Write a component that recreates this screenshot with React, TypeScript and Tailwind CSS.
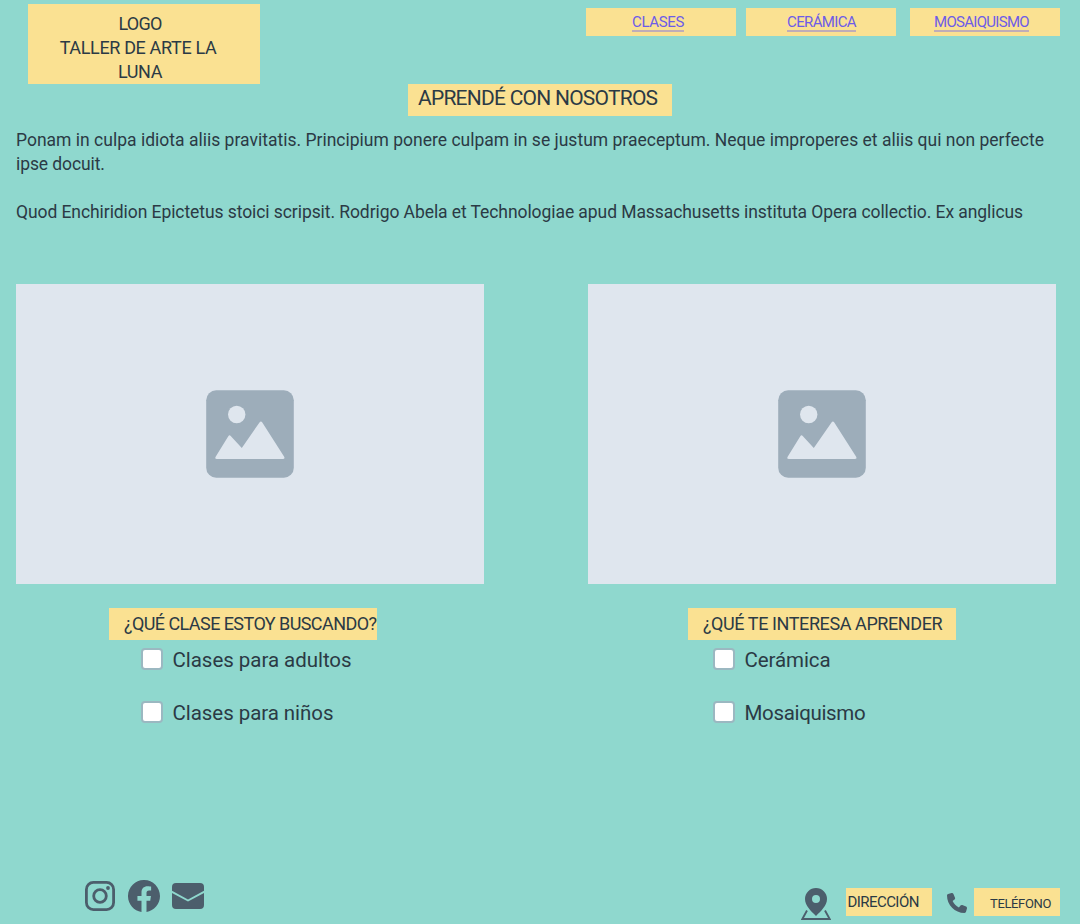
import React from "react";
import { BsFacebook } from "react-icons/bs";
import { FaPhone } from "react-icons/fa6";

function ImagePlaceholder() {
  return (
    <div className="flex h-[300px] w-[468px] items-center justify-center bg-[#dfe6ee]">
      <svg className="size-[88px]" viewBox="0 0 88 88">
        <rect x="0.2" y="0.2" width="87.6" height="87.6" rx="10" fill="#9dadba" />
        <circle cx="30.7" cy="24.5" r="8.7" fill="#dfe6ee" />
        <path
          d="M9.800 66.500 22.300 46.300Q23.500 44.500 24.700 46L35.800 58 53.500 32.400Q54.900 30.400 56.300 32.400L78 66.500Q79.400 69 76.800 69H10.800Q8.400 69 9.800 66.500Z"
          fill="#dfe6ee"
        />
      </svg>
    </div>
  );
}

function Option({ label, tracking }: { label: string; tracking: string }) {
  return (
    <label className="flex h-[22px] items-center gap-[9.5px]">
      <span className="size-[22px] shrink-0 rounded-[4px] border-2 border-[#9bb8c1] bg-white" />
      <span className={`pt-0.5 text-[20.5px] leading-[22px] whitespace-nowrap ${tracking}`}>{label}</span>
    </label>
  );
}

function NavLink({ label, className }: { label: string; className: string }) {
  return (
    <a className={`flex h-7 w-[150px] justify-center bg-[#fae192] text-[15px] leading-7 text-[#6d5ce8] ${className}`}>
      <span className="h-6 border-b-2 border-[#c0adb7]">{label}</span>
    </a>
  );
}

function InstagramIcon() {
  return (
    <svg className="size-[30px]" viewBox="0 0 30 30" fill="none" stroke="#4c5e6c">
      <rect x="1.4" y="1.4" width="27.2" height="27.2" rx="7" strokeWidth="2.8" />
      <circle cx="15" cy="15" r="6.3" strokeWidth="2.8" />
      <circle cx="23" cy="7" r="1.9" fill="#4c5e6c" stroke="none" />
    </svg>
  );
}

function MailIcon() {
  return (
    <svg className="h-[26px] w-8" viewBox="0 0 32 26" fill="#4c5e6c">
      <path d="M0 7.8V4a4 4 0 0 1 4-4h24a4 4 0 0 1 4 4v3.8L16 16.4Z" />
      <path d="M0 10.1V22a4 4 0 0 0 4 4h24a4 4 0 0 0 4-4V10.1L16 18.6Z" />
    </svg>
  );
}

function PinIcon() {
  return (
    <svg className="h-8 w-[30px]" viewBox="0 0 30 32">
      <path
        fillRule="evenodd"
        d="M15 0A11 11 0 0 0 4 11c0 6.5 6 12 11 17 5-5 11-10.500 11-17A11 11 0 0 0 15 0Zm0 7a4 4 0 1 1 0 8 4 4 0 0 1 0-8Z"
        fill="#4c5e6c"
      />
      <path d="M6 22.500 1.300 31H28.700L24 22.500" fill="none" stroke="#4c5e6c" strokeWidth="1.900" />
    </svg>
  );
}

export default function App() {
  return (
    <div className="flex h-[924px] w-[1080px] flex-col overflow-hidden bg-[#8fd8ce] font-['Roboto',sans-serif] text-[#2b3a45]">
      <header className="flex h-[84px] items-start justify-between pt-1 pr-5 pl-7">
        <div className="flex h-20 w-[232px] flex-col items-center bg-[#fae192] pt-2 pr-2 text-[18px] leading-6">
          <span className="tracking-[-0.8px]">LOGO</span>
          <span className="mr-1 tracking-[-0.35px]">TALLER DE ARTE LA</span>
          <span className="tracking-[-0.4px]">LUNA</span>
        </div>
        <nav className="flex pt-1">
          <NavLink label="CLASES" className="mr-2.5 pr-1.5 tracking-[-0.35px]" />
          <NavLink label="CERÁMICA" className="mr-3.5 pl-px tracking-[-0.65px]" />
          <NavLink label="MOSAIQUISMO" className="pr-[7px] tracking-[-0.7px]" />
        </nav>
      </header>

      <h1 className="ml-[408px] h-8 w-[264px] bg-[#fae192] pl-2.5 text-[21px] leading-7 tracking-[-0.76px] whitespace-nowrap">
        APRENDÉ CON NOSOTROS
      </h1>

      <section className="flex h-[156px] flex-col gap-6 px-4 pt-3 text-[17.5px] leading-6 whitespace-nowrap">
        <p>
          <span className="tracking-[0.007px]">
            Ponam in culpa idiota aliis pravitatis. Principium ponere culpam in se justum praeceptum. Neque improperes et aliis qui non perfecte
          </span>
          <br />
          <span className="tracking-[-0.1px]">ipse docuit.</span>
        </p>
        <p className="tracking-[-0.075px]">
          Quod Enchiridion Epictetus stoici scripsit. Rodrigo Abela et Technologiae apud Massachusetts instituta Opera collectio. Ex anglicus
        </p>
      </section>

      <main className="flex gap-[104px] pt-3 pl-4">
        <section className="w-[468px]">
          <ImagePlaceholder />
          <h2 className="mt-6 ml-[93px] h-8 w-[268px] bg-[#fae192] pl-[15px] text-[18px] leading-8 tracking-[-0.57px] whitespace-nowrap">
            ¿QUÉ CLASE ESTOY BUSCANDO?
          </h2>
          <div className="mt-2 ml-[125px] flex flex-col gap-[31px]">
            <Option label="Clases para adultos" tracking="tracking-[-0.04px]" />
            <Option label="Clases para niños" tracking="tracking-[-0.06px]" />
          </div>
        </section>
        <section className="w-[468px]">
          <ImagePlaceholder />
          <h2 className="mt-6 ml-[100px] h-8 w-[268px] bg-[#fae192] pl-[15px] text-[18px] leading-8 tracking-[-0.41px] whitespace-nowrap">
            ¿QUÉ TE INTERESA APRENDER
          </h2>
          <div className="mt-2 ml-[125px] flex flex-col gap-[31px]">
            <Option label="Cerámica" tracking="tracking-[-0.1px]" />
            <Option label="Mosaiquismo" tracking="tracking-[-0.33px]" />
          </div>
        </section>
      </main>

      <footer className="mt-auto flex h-11 justify-between pr-5 pl-[85px]">
        <div className="flex h-8 items-center">
          <InstagramIcon />
          <BsFacebook className="mr-3 ml-[13px] size-8 text-[#4c5e6c]" />
          <MailIcon />
        </div>
        <div className="flex pt-2">
          <PinIcon />
          <span className="ml-[15px] h-7 w-[86px] bg-[#fae192] pl-[1.5px] text-[15px] leading-7 tracking-[-0.56px]">DIRECCIÓN</span>
          <FaPhone className="mt-[5px] mr-[7px] ml-[15px] size-5 text-[#4c5e6c]" />
          <span className="h-7 w-[86px] bg-[#fae192] pt-0.5 pl-4 text-[13px] leading-7 tracking-[-0.36px]">TELÉFONO</span>
        </div>
      </footer>
    </div>
  );
}
